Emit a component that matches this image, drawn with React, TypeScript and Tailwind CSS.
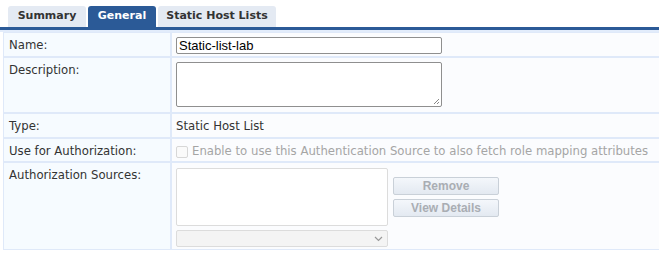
import React from "react";

const verdana = { fontFamily: '"DejaVu Sans", Verdana, sans-serif' };
const arial = { fontFamily: '"Liberation Sans", Arial, sans-serif' };

function Row({ label, h, children }: { label: string; h: string; children?: React.ReactNode }) {
  return (
    <div className={`flex gap-[2px] ${h}`}>
      <div className="w-[166px] shrink-0 bg-[#f6fbff] pl-[5px] pt-[4px] text-[11.7px] text-[#333]">{label}</div>
      <div className="flex-1 bg-[#fbfcfe] pl-[4px] pt-[4px] text-[11.7px] text-[#333]">{children}</div>
    </div>
  );
}

export default function App() {
  const tabs = [
    { name: "Summary", w: "w-[78px]", active: false },
    { name: "General", w: "w-[68px]", active: true },
    { name: "Static Host Lists", w: "w-[118px]", active: false },
  ];

  return (
    <div className="w-[659px] h-[254px] bg-white overflow-hidden" style={verdana}>
      {/* tabs */}
      <div className="flex gap-[2px] pl-[8px] pt-[6px]">
        {tabs.map((t) => (
          <div
            key={t.name}
            className={`${t.w} h-[21px] rounded-t-[3px] flex items-center justify-center text-[11px] font-bold ${
              t.active ? "bg-[#2b5a97] text-white" : "bg-[#e4eaf3] text-[#333]"
            }`}
          >
            {t.name}
          </div>
        ))}
      </div>
      <div className="h-[3px] bg-[#2b5a97]" />
      <div className="h-[2px] bg-[#e2ecfb]" />

      {/* form table */}
      <div className="ml-[3px] bg-[#dfe9f9] flex flex-col gap-[2px] p-[1px] pr-0">
        <Row label="Name:" h="h-[23px]">
          <div className="w-[266px] h-[17px] border border-[#8f8f8f] rounded-[2px] bg-white px-[2px] text-[13px] leading-[15px] text-black" style={arial}>
            Static-list-lab
          </div>
        </Row>
        <Row label="Description:" h="h-[54px]">
          <div className="relative w-[266px] h-[45px] border border-[#8f8f8f] rounded-[2px] bg-white">
            <svg className="absolute right-[1px] bottom-[1px]" width="7" height="7" viewBox="0 0 7 7">
              <path d="M6 1 L1 6 M6 4 L4 6" stroke="#888" strokeWidth="1" />
            </svg>
          </div>
        </Row>
        <Row label="Type:" h="h-[23px]">
          <span>Static Host List</span>
        </Row>
        <Row label="Use for Authorization:" h="h-[22px]">
          <div className="flex items-center gap-[4px] text-[#a5a5a5]">
            <div className="w-[12px] h-[12px] border border-[#d7d7d7] rounded-[2px] bg-[#fafafa]" />
            <span>Enable to use this Authentication Source to also fetch role mapping attributes</span>
          </div>
        </Row>
        <Row label="Authorization Sources:" h="h-[86px]">
          <div className="flex gap-[5px] pt-[1px]">
            <div className="flex flex-col gap-[4px]">
              <div className="w-[212px] h-[58px] border border-[#dcdcdc] rounded-[2px] bg-white" />
              <div className="w-[212px] h-[17px] border border-[#dcdcdc] rounded-[2px] bg-[#f4f4f4] flex items-center justify-end pr-[4px]">
                <svg width="9" height="6" viewBox="0 0 9 6">
                  <path d="M1 1 L4.5 4.5 L8 1" fill="none" stroke="#999" strokeWidth="1.2" />
                </svg>
              </div>
            </div>
            <div className="flex flex-col gap-[4px] pt-[9px]">
              {["Remove", "View Details"].map((b) => (
                <div
                  key={b}
                  className="w-[106px] h-[18px] border border-[#c9d0d8] rounded-[2px] bg-gradient-to-b from-[#f4f7fb] to-[#e3e9f1] flex items-center justify-center text-[12px] font-bold text-[#a9adb3]"
                  style={arial}
                >
                  {b}
                </div>
              ))}
            </div>
          </div>
        </Row>
      </div>
    </div>
  );
}
